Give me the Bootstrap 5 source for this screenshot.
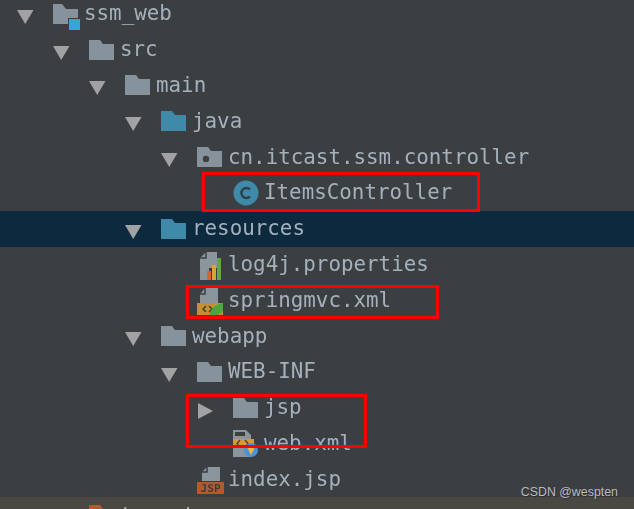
<!DOCTYPE html>
<html lang="en">
<head>
    <meta charset="UTF-8">
    <title>Project tree</title>
    <link href="https://cdn.jsdelivr.net/npm/bootstrap@5.3.3/dist/css/bootstrap.min.css" rel="stylesheet">
    <style>
        html, body {
            height: 509px;
            overflow: hidden;
            background: #3c3f41;
        }

        .tree-wrap {
            height: 509px;
            overflow: hidden;
            position: relative;
            background: #3c3f41;
        }

        .tree-list {
            margin-top: -4px;
        }

        .tree-row {
            height: 35.8px;
            font-family: "DejaVu Sans Mono", monospace;
            font-size: 20.85px;
            line-height: 1;
            color: #a4b1bd;
            white-space: nowrap;
        }

        .tree-row.selected {
            background: #0d293e;
        }

        .tree-row.strip {
            background: #4a4843;
        }

        .label-text {
            margin-left: 4px;
            filter: blur(0.6px);
        }

        .depth-0 { padding-left: 17px; }
        .depth-1 { padding-left: 53px; }
        .depth-2 { padding-left: 89px; }
        .depth-3 { padding-left: 125px; }
        .depth-4 { padding-left: 161px; }
        .depth-5 { padding-left: 197px; }

        .arrow-slot {
            width: 36px;
            height: 28px;
            flex: none;
            overflow: visible;
            filter: blur(0.4px);
        }

        .ico {
            width: 27px;
            height: 28px;
            flex: none;
            overflow: visible;
            filter: blur(0.5px);
        }

        .red-box {
            position: absolute;
            border: 3px solid #f00;
        }

        .box-a { left: 202px; top: 172px; width: 278px; height: 40px; }
        .box-b { left: 186px; top: 285px; width: 253px; height: 34px; }
        .box-c { left: 186px; top: 394px; width: 181px; height: 54px; }

        .watermark {
            position: absolute;
            right: 16px;
            top: 484px;
            font-family: "Liberation Sans", sans-serif;
            font-size: 12.4px;
            color: #b9bbbc;
            line-height: 16px;
            text-shadow: 1px 1px 1px #2b2d2e;
        }

        .jsp-tag {
            font-family: "DejaVu Sans Mono", monospace;
            font-size: 11px;
            font-weight: 700;
            fill: #3c3f41;
        }
    </style>
</head>
<body>

<svg width="0" height="0" class="position-absolute">
    <defs>
        <symbol id="down" viewBox="0 0 36 28" overflow="visible"><path d="M0 10H16.500L8.200 24Z" fill="#a0a2a3"/></symbol>
        <symbol id="right" viewBox="0 0 36 28" overflow="visible"><path d="M1 9V25L16 17Z" fill="#a0a2a3"/></symbol>
        <symbol id="folder" viewBox="0 0 27 28" overflow="visible"><path d="M0 4H11L14 8H25V24H0Z" fill="#87939c"/></symbol>
        <symbol id="folder-blue" viewBox="0 0 27 28" overflow="visible"><path d="M0 4H11L14 8H25V24H0Z" fill="#3f89a9"/></symbol>
        <symbol id="folder-orange" viewBox="0 0 27 28" overflow="visible"><path d="M0 4H11L14 8H25V24H0Z" fill="#b4592a"/></symbol>
        <symbol id="package" viewBox="0 0 27 28" overflow="visible"><path d="M0 4H11L14 8H25V24H0Z" fill="#87939c"/><circle cx="9" cy="16" r="3.200" fill="#3c3f41"/></symbol>
        <symbol id="module" viewBox="0 0 27 28" overflow="visible"><path d="M0 4H9L13 9H25V24H0Z" fill="#87939c"/><rect x="15" y="18" width="12" height="12" fill="#3c3f41"/><rect x="16" y="19" width="11" height="11" fill="#35a7d6"/></symbol>
        <symbol id="class" viewBox="0 0 27 28" overflow="visible"><circle cx="13" cy="14" r="12.500" fill="#3f89a9"/><path d="M17 10.500A5 5 0 1 0 17 17.500" fill="none" stroke="#2d3f47" stroke-width="2.400"/></symbol>
        <symbol id="props" viewBox="0 0 27 28" overflow="visible"><path d="M9 2H20V18H12V30H3V8Z" fill="#8a959d"/><path d="M9 2V8H3" fill="none" stroke="#3c3f41" stroke-width="1.500"/><rect x="10" y="21" width="4" height="9" fill="#d3672a"/><rect x="15" y="15" width="4" height="15" fill="#d9a53b"/><rect x="20" y="8" width="4" height="22" fill="#62a83f"/></symbol>
        <symbol id="spring" viewBox="0 0 27 28" overflow="visible"><path d="M8 2H21V17H3V8Z" fill="#8a959d"/><path d="M8 2V8H3" fill="none" stroke="#3c3f41" stroke-width="1.500"/><rect x="0" y="17" width="26" height="12" fill="#c6902f"/><path d="M9 20L6 23L9 26M12 20L15 23L12 26" fill="none" stroke="#3c3f41" stroke-width="1.500"/><path d="M13 29C13 22 19 18 26 17V24C25 28 19 30 13 29Z" fill="#4aa63f"/></symbol>
        <symbol id="webxml" viewBox="0 0 27 28" overflow="visible"><path d="M0 1H13L18 6V28H0Z" fill="#8a959d"/><path d="M2 3H12V7H2Z" fill="#3c3f41"/><rect x="0" y="10" width="21" height="9" fill="#d99a2f"/><path d="M7 11L4 14.500L7 18M12 11L15 14.500L12 18" fill="none" stroke="#3c3f41" stroke-width="1.300"/><circle cx="18" cy="21" r="7" fill="#4a94d6"/><path d="M14 18H22L18 26Z" fill="#efb93f"/></symbol>
        <symbol id="jsp" viewBox="0 0 27 28" overflow="visible"><path d="M10 2H23V16H5V7Z" fill="#8a959d"/><path d="M10 2V7H5" fill="none" stroke="#3c3f41" stroke-width="1.500"/><rect x="0" y="17" width="27" height="12" fill="#b4592a"/></symbol>
    </defs>
</svg>

<div class="tree-wrap">
    <div class="tree-list">
        <div class="tree-row d-flex align-items-center depth-0"><svg class="arrow-slot"><use href="#down"/></svg><svg class="ico"><use href="#module"/></svg><span class="label-text">ssm_web</span></div>
        <div class="tree-row d-flex align-items-center depth-1"><svg class="arrow-slot"><use href="#down"/></svg><svg class="ico"><use href="#folder"/></svg><span class="label-text">src</span></div>
        <div class="tree-row d-flex align-items-center depth-2"><svg class="arrow-slot"><use href="#down"/></svg><svg class="ico"><use href="#folder"/></svg><span class="label-text">main</span></div>
        <div class="tree-row d-flex align-items-center depth-3"><svg class="arrow-slot"><use href="#down"/></svg><svg class="ico"><use href="#folder-blue"/></svg><span class="label-text">java</span></div>
        <div class="tree-row d-flex align-items-center depth-4"><svg class="arrow-slot"><use href="#down"/></svg><svg class="ico"><use href="#package"/></svg><span class="label-text">cn.itcast.ssm.controller</span></div>
        <div class="tree-row d-flex align-items-center depth-5"><div class="arrow-slot"></div><svg class="ico"><use href="#class"/></svg><span class="label-text">ItemsController</span></div>
        <div class="tree-row selected d-flex align-items-center depth-3"><svg class="arrow-slot"><use href="#down"/></svg><svg class="ico"><use href="#folder-blue"/></svg><span class="label-text">resources</span></div>
        <div class="tree-row d-flex align-items-center depth-4"><div class="arrow-slot"></div><svg class="ico"><use href="#props"/></svg><span class="label-text">log4j.properties</span></div>
        <div class="tree-row d-flex align-items-center depth-4"><div class="arrow-slot"></div><svg class="ico"><use href="#spring"/></svg><span class="label-text">springmvc.xml</span></div>
        <div class="tree-row d-flex align-items-center depth-3"><svg class="arrow-slot"><use href="#down"/></svg><svg class="ico"><use href="#folder"/></svg><span class="label-text">webapp</span></div>
        <div class="tree-row d-flex align-items-center depth-4"><svg class="arrow-slot"><use href="#down"/></svg><svg class="ico"><use href="#folder"/></svg><span class="label-text">WEB-INF</span></div>
        <div class="tree-row d-flex align-items-center depth-5"><svg class="arrow-slot"><use href="#right"/></svg><svg class="ico"><use href="#folder"/></svg><span class="label-text">jsp</span></div>
        <div class="tree-row d-flex align-items-center depth-5"><div class="arrow-slot"></div><svg class="ico"><use href="#webxml"/></svg><span class="label-text">web.xml</span></div>
        <div class="tree-row d-flex align-items-center depth-4"><div class="arrow-slot"></div><svg class="ico"><use href="#jsp"/><text class="jsp-tag" x="3.500" y="27" textLength="20">JSP</text></svg><span class="label-text">index.jsp</span></div>
        <div class="tree-row strip d-flex align-items-center depth-1"><div class="arrow-slot"></div><svg class="ico"><use href="#folder-orange"/></svg><span class="label-text">target</span></div>
    </div>

    <div class="red-box box-a"></div>
    <div class="red-box box-b"></div>
    <div class="red-box box-c"></div>
    <div class="watermark">CSDN @wespten</div>
</div>

<script src="https://cdn.jsdelivr.net/npm/bootstrap@5.3.3/dist/js/bootstrap.bundle.min.js"></script>
</body>
</html>
